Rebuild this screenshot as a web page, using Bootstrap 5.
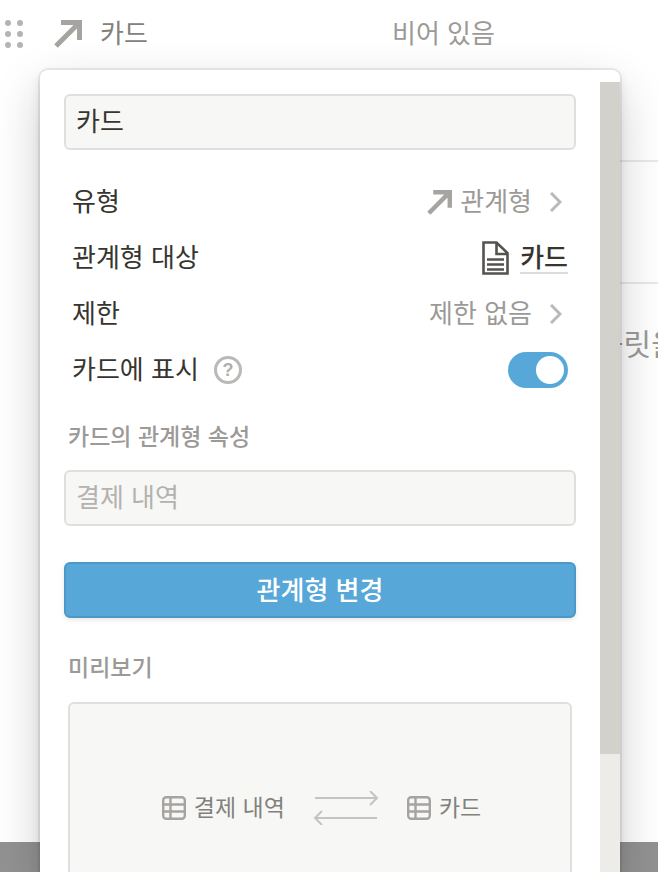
<!DOCTYPE html>
<html lang="ko">
<head>
<meta charset="utf-8">
<meta name="viewport" content="width=device-width, initial-scale=1">
<title>카드</title>
<link rel="stylesheet" href="https://cdn.jsdelivr.net/npm/bootstrap@5.3.0/dist/css/bootstrap.min.css">
<style>
:root { --ink: #37352f; --muted: #9b9a97; --line: #dfdfde; --field: #f7f7f5; --accent: #57a8d9; }
body { font-family: "Noto Sans CJK KR", "Liberation Sans", sans-serif; font-size: 26px; line-height: 40px; color: var(--ink); background: #929292; }
.page { height: 100vh; padding-bottom: 30px; }
.sheet { background: #fff; overflow: hidden; }
.property { height: 68px; padding-left: 5px; }
.property .name { color: #82817c; width: 338px; gap: 18px; }
.property .empty { color: var(--muted); }
.property span { padding-bottom: 4px; }
.grip { margin-right: 31px; }
.section-row { height: 122px; border-bottom: 2px solid #e9e9e8; }
.section-row.first { height: 94px; }
.hint { width: 62px; margin-top: 38px; font-size: 30px; color: var(--muted); white-space: nowrap; }
.popup { position: absolute; top: 70px; bottom: 0; left: 40px; right: 38px; background: #fff; border-radius: 8px 8px 0 0; overflow: hidden;
  box-shadow: 0 0 0 2px rgba(15,15,15,.07), 0 6px 12px rgba(15,15,15,.1), 0 18px 48px rgba(15,15,15,.2); }
.popup-body { padding: 24px; min-width: 0; }
.popup .form-control { height: 56px; padding: 0 10px 6px; border: 2px solid var(--line); border-radius: 6px; background: var(--field); color: var(--ink); font-size: 26px; }
.popup .form-control::placeholder { color: #b3b2af; opacity: 1; }
.setting { height: 56px; padding: 0 8px; }
.setting > span, .setting > label { padding-bottom: 4px; }
.btn-value { color: var(--muted); font-size: 26px; line-height: 40px; padding: 0 6px 0 0; border: 0; }
.btn-value span { padding-bottom: 4px; }
.chevron { margin-left: 18px; }
.target { color: var(--ink); font-weight: 500; gap: 11px; }
.target-name { line-height: 28px; padding-bottom: 2px; border-bottom: 2px solid #dcdcdb; }
.help { width: 28px; height: 28px; margin-left: 15px; padding: 0; border: 3px solid #bab9b7; border-radius: 50%; color: #b0afac; font: bold 18px/22px "Liberation Sans", sans-serif; }
.form-switch .form-check-input { width: 60px; height: 36px; margin: 0; border: 0; background-size: 36px 36px; }
.form-switch .form-check-input:checked { background-color: var(--accent);
  background-image: url("data:image/svg+xml,%3csvg xmlns='http://www.w3.org/2000/svg' viewBox='0 0 36 36'%3e%3ccircle cx='18' cy='18' r='14' fill='%23fff'/%3e%3c/svg%3e"); }
.caption { color: var(--muted); font-size: 23px; font-weight: 500; line-height: 32px; padding-left: 4px; }
.field-caption { margin: 21px 0 19px; }
.btn-change { height: 56px; margin-top: 36px; padding: 0 0 4px; border: 2px solid #4d98c6; border-radius: 6px; background: var(--accent); color: #fff; font-size: 26px; font-weight: 500; box-shadow: 0 2px 4px rgba(15,15,15,.1); }
.preview { height: 212px; margin: 20px 4px 0; padding-left: 3px; border: 2px solid var(--line); border-radius: 6px; background: var(--field); color: #82817c; font-size: 23px; line-height: 32px; }
.preview span { padding-bottom: 4px; }
.scroll-track { width: 20px; margin-top: 12px; background: #edece9; }
.scroll-thumb { height: 85%; background: #d3d1cb; }
</style>
</head>
<body>
<main class="page">
  <div class="sheet h-100">
    <div class="property d-flex align-items-center">
      <svg class="grip flex-shrink-0" width="18" height="28" viewBox="0 0 18 28" fill="#b5b4b1" aria-hidden="true"><circle cx="3" cy="3" r="3"/><circle cx="15" cy="3" r="3"/><circle cx="3" cy="14" r="3"/><circle cx="15" cy="14" r="3"/><circle cx="3" cy="25" r="3"/><circle cx="15" cy="25" r="3"/></svg>
      <div class="name d-flex align-items-center flex-shrink-0">
        <svg width="28" height="28" viewBox="0 0 28 28" fill="none" stroke="#a5a4a1" stroke-width="5" aria-hidden="true"><path d="M7 2.500h18.500V20M25 3 2 26"/></svg>
        <span>카드</span>
      </div>
      <span class="empty text-nowrap">비어 있음</span>
    </div>
    <div class="section-row first ms-5"></div>
    <div class="section-row ms-5"></div>
    <p class="hint ms-auto mb-0">플릿을</p>
  </div>
</main>

<section class="popup d-flex" role="dialog" aria-label="속성 편집">
  <div class="popup-body flex-grow-1">
    <input class="form-control shadow-none mb-4" type="text" value="카드" aria-label="속성 이름">
    <div class="setting d-flex align-items-center justify-content-between">
      <span>유형</span>
      <button class="btn btn-value d-flex align-items-center" type="button">
        <svg class="me-2" width="25" height="25" viewBox="0 0 28 28" fill="none" stroke="#a5a4a1" stroke-width="5" aria-hidden="true"><path d="M7 2.500h18.500V20M25 3 2 26"/></svg>
        <span>관계형</span>
        <svg class="chevron" width="12" height="20" viewBox="0 0 12 20" fill="none" stroke="#bab9b7" stroke-width="3" aria-hidden="true"><path d="m1 1 9 9-9 9"/></svg>
      </button>
    </div>
    <div class="setting d-flex align-items-center justify-content-between">
      <span>관계형 대상</span>
      <a class="target d-flex align-items-center text-decoration-none" href="#">
        <svg width="27" height="34" viewBox="0 0 27 34" fill="none" stroke="#55534e" stroke-width="2.600" aria-hidden="true"><path d="M1.500 1.500h13L25.500 12v20.500h-24zM14.500 1.500V13h11M5 18.500h17M5 23.500h17M5 28.500h17"/></svg>
        <span class="target-name">카드</span>
      </a>
    </div>
    <div class="setting d-flex align-items-center justify-content-between">
      <span>제한</span>
      <button class="btn btn-value d-flex align-items-center" type="button">
        <span>제한 없음</span>
        <svg class="chevron" width="12" height="20" viewBox="0 0 12 20" fill="none" stroke="#bab9b7" stroke-width="3" aria-hidden="true"><path d="m1 1 9 9-9 9"/></svg>
      </button>
    </div>
    <div class="setting d-flex align-items-center">
      <label for="showOnCard">카드에 표시</label>
      <button class="help bg-transparent" type="button" aria-label="도움말">?</button>
      <div class="form-check form-switch d-flex ms-auto mb-0 p-0">
        <input class="form-check-input shadow-none" type="checkbox" role="switch" id="showOnCard" checked>
      </div>
    </div>
    <label class="caption field-caption d-block" for="relatedName">카드의 관계형 속성</label>
    <input class="form-control shadow-none" id="relatedName" type="text" placeholder="결제 내역">
    <button class="btn btn-change w-100" type="button">관계형 변경</button>
    <h2 class="caption mb-0 mt-4 pt-2">미리보기</h2>
    <div class="preview d-flex align-items-center justify-content-center">
      <svg class="me-2" width="24" height="24" viewBox="0 0 24 24" fill="none" stroke="#a5a4a1" stroke-width="2.400" aria-hidden="true"><rect x="1.200" y="1.200" width="21.600" height="21.600" rx="3"/><path d="M1 8.500h22M1 15.500h22M8.500 1v22"/></svg>
      <span>결제 내역</span>
      <svg class="mx-4" width="74" height="34" viewBox="0 0 74 34" fill="none" stroke="#c4c4c2" stroke-width="2" aria-hidden="true"><path d="M6 7h62M61 0l7 7-7 7M68 27H6M13 20l-7 7 7 7"/></svg>
      <svg class="me-2" width="24" height="24" viewBox="0 0 24 24" fill="none" stroke="#a5a4a1" stroke-width="2.400" aria-hidden="true"><rect x="1.200" y="1.200" width="21.600" height="21.600" rx="3"/><path d="M1 8.500h22M1 15.500h22M8.500 1v22"/></svg>
      <span>카드</span>
    </div>
  </div>
  <div class="scroll-track flex-shrink-0"><div class="scroll-thumb"></div></div>
</section>
<script src="https://cdn.jsdelivr.net/npm/bootstrap@5.3.0/dist/js/bootstrap.bundle.min.js"></script>
</body>
</html>
